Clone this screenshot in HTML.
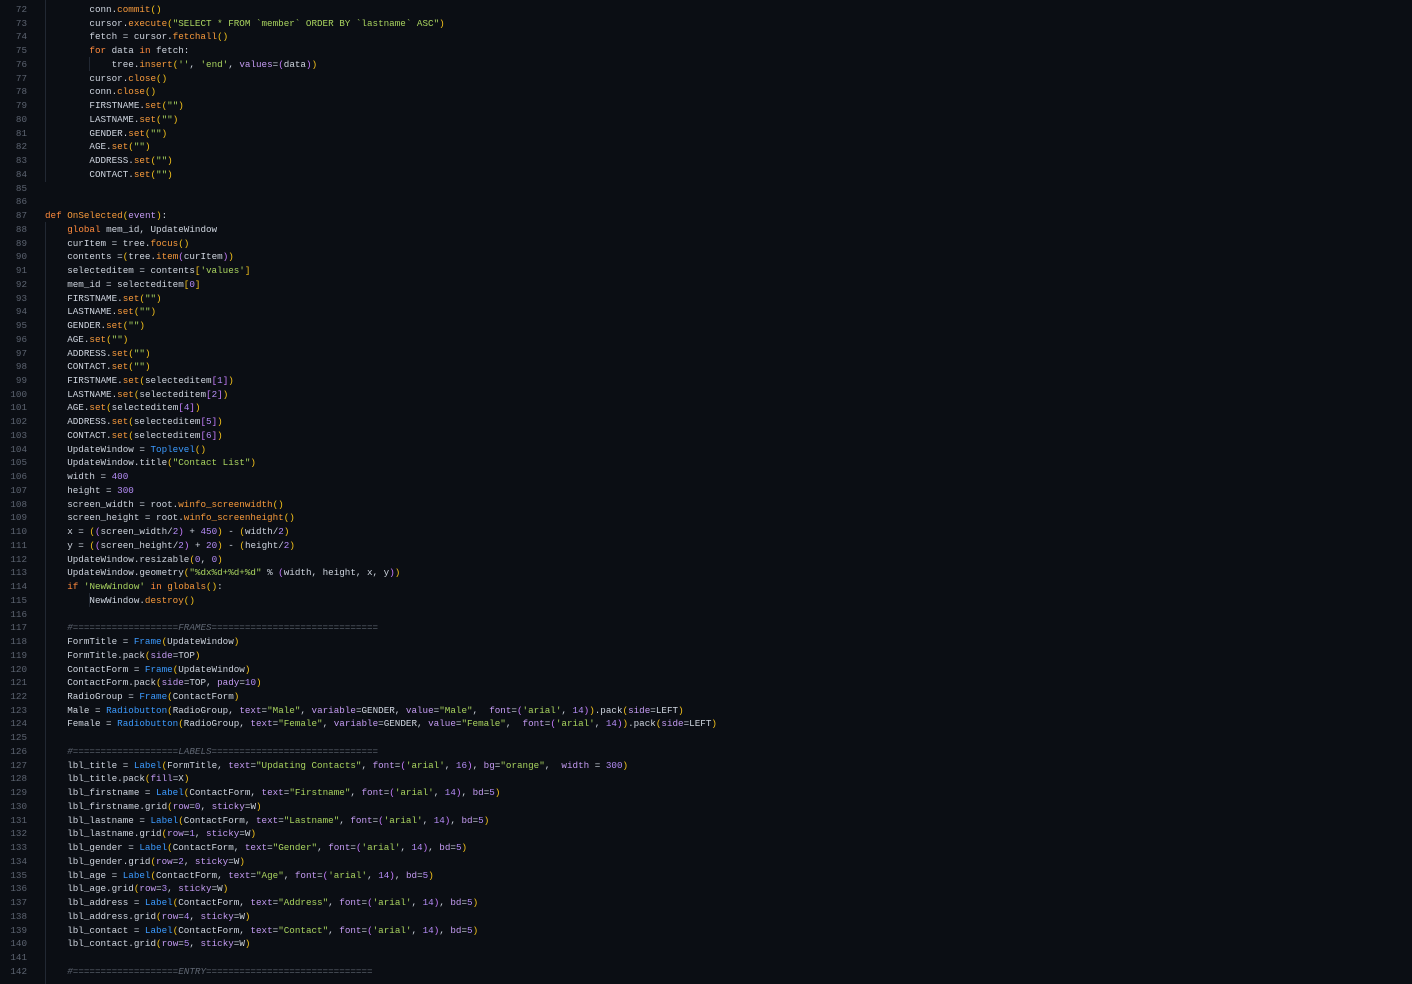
<!DOCTYPE html>
<html><head><meta charset="utf-8"><style>
html,body{margin:0;padding:0;background:#0b0e14;width:1412px;height:984px;overflow:hidden}
.ed{position:absolute;left:0;top:3px;font-family:"Liberation Mono",monospace;font-size:9.25px;line-height:13.74px;color:#cfd5df;white-space:pre}
.ln{position:absolute;left:0;width:27px;text-align:right;color:#5c6370}
.cd{position:absolute;left:45px}
.k{color:#ff8a3d}.f{color:#f79a3c}.s{color:#a9d35f}.n{color:#b48cf5}.c{color:#3c9bff}.p{color:#c49bf2}.y{color:#f5c21b}.v{color:#c77dff}.cm{color:#5f6672;font-style:italic}
.g{position:absolute;width:1px;background:#222833}
</style></head><body>
<div class="g" style="left:45px;top:0;height:182px"></div>
<div class="g" style="left:45px;top:222px;height:762px"></div>
<div class="g" style="left:89px;top:57px;height:14px"></div>
<div class="g" style="left:89px;top:593px;height:14px"></div>
<div class="ed" id="e"></div>
<script>
var L=[
'        conn.<span class="f">commit</span><span class="y">()</span>',
'        cursor.<span class="f">execute</span><span class="y">(</span><span class="s">"SELECT * FROM `member` ORDER BY `lastname` ASC"</span><span class="y">)</span>',
'        fetch = cursor.<span class="f">fetchall</span><span class="y">()</span>',
'        <span class="k">for</span> data <span class="k">in</span> fetch:',
'            tree.<span class="f">insert</span><span class="y">(</span><span class="s">\'\'</span>, <span class="s">\'end\'</span>, <span class="p">values</span>=<span class="v">(</span>data<span class="v">)</span><span class="y">)</span>',
'        cursor.<span class="f">close</span><span class="y">()</span>',
'        conn.<span class="f">close</span><span class="y">()</span>',
'        FIRSTNAME.<span class="f">set</span><span class="y">(</span><span class="s">""</span><span class="y">)</span>',
'        LASTNAME.<span class="f">set</span><span class="y">(</span><span class="s">""</span><span class="y">)</span>',
'        GENDER.<span class="f">set</span><span class="y">(</span><span class="s">""</span><span class="y">)</span>',
'        AGE.<span class="f">set</span><span class="y">(</span><span class="s">""</span><span class="y">)</span>',
'        ADDRESS.<span class="f">set</span><span class="y">(</span><span class="s">""</span><span class="y">)</span>',
'        CONTACT.<span class="f">set</span><span class="y">(</span><span class="s">""</span><span class="y">)</span>',
'',
'',
'<span class="k">def</span> <span class="f">OnSelected</span><span class="y">(</span><span class="p">event</span><span class="y">)</span>:',
'    <span class="k">global</span> mem_id, UpdateWindow',
'    curItem = tree.<span class="f">focus</span><span class="y">()</span>',
'    contents =<span class="y">(</span>tree.<span class="f">item</span><span class="v">(</span>curItem<span class="v">)</span><span class="y">)</span>',
'    selecteditem = contents<span class="y">[</span><span class="s">\'values\'</span><span class="y">]</span>',
'    mem_id = selecteditem<span class="y">[</span><span class="n">0</span><span class="y">]</span>',
'    FIRSTNAME.<span class="f">set</span><span class="y">(</span><span class="s">""</span><span class="y">)</span>',
'    LASTNAME.<span class="f">set</span><span class="y">(</span><span class="s">""</span><span class="y">)</span>',
'    GENDER.<span class="f">set</span><span class="y">(</span><span class="s">""</span><span class="y">)</span>',
'    AGE.<span class="f">set</span><span class="y">(</span><span class="s">""</span><span class="y">)</span>',
'    ADDRESS.<span class="f">set</span><span class="y">(</span><span class="s">""</span><span class="y">)</span>',
'    CONTACT.<span class="f">set</span><span class="y">(</span><span class="s">""</span><span class="y">)</span>',
'    FIRSTNAME.<span class="f">set</span><span class="y">(</span>selecteditem<span class="v">[</span><span class="n">1</span><span class="v">]</span><span class="y">)</span>',
'    LASTNAME.<span class="f">set</span><span class="y">(</span>selecteditem<span class="v">[</span><span class="n">2</span><span class="v">]</span><span class="y">)</span>',
'    AGE.<span class="f">set</span><span class="y">(</span>selecteditem<span class="v">[</span><span class="n">4</span><span class="v">]</span><span class="y">)</span>',
'    ADDRESS.<span class="f">set</span><span class="y">(</span>selecteditem<span class="v">[</span><span class="n">5</span><span class="v">]</span><span class="y">)</span>',
'    CONTACT.<span class="f">set</span><span class="y">(</span>selecteditem<span class="v">[</span><span class="n">6</span><span class="v">]</span><span class="y">)</span>',
'    UpdateWindow = <span class="c">Toplevel</span><span class="y">()</span>',
'    UpdateWindow.title<span class="y">(</span><span class="s">"Contact List"</span><span class="y">)</span>',
'    width = <span class="n">400</span>',
'    height = <span class="n">300</span>',
'    screen_width = root.<span class="f">winfo_screenwidth</span><span class="y">()</span>',
'    screen_height = root.<span class="f">winfo_screenheight</span><span class="y">()</span>',
'    x = <span class="y">(</span><span class="v">(</span>screen_width/<span class="n">2</span><span class="v">)</span> + <span class="n">450</span><span class="y">)</span> - <span class="y">(</span>width/<span class="n">2</span><span class="y">)</span>',
'    y = <span class="y">(</span><span class="v">(</span>screen_height/<span class="n">2</span><span class="v">)</span> + <span class="n">20</span><span class="y">)</span> - <span class="y">(</span>height/<span class="n">2</span><span class="y">)</span>',
'    UpdateWindow.resizable<span class="y">(</span><span class="n">0</span>, <span class="n">0</span><span class="y">)</span>',
'    UpdateWindow.geometry<span class="y">(</span><span class="s">"%dx%d+%d+%d"</span> % <span class="v">(</span>width, height, x, y<span class="v">)</span><span class="y">)</span>',
'    <span class="k">if</span> <span class="s">\'NewWindow\'</span> <span class="k">in</span> <span class="f">globals</span><span class="y">()</span>:',
'        NewWindow.<span class="f">destroy</span><span class="y">()</span>',
'',
'    <span class="cm">#===================FRAMES==============================</span>',
'    FormTitle = <span class="c">Frame</span><span class="y">(</span>UpdateWindow<span class="y">)</span>',
'    FormTitle.pack<span class="y">(</span><span class="p">side</span>=TOP<span class="y">)</span>',
'    ContactForm = <span class="c">Frame</span><span class="y">(</span>UpdateWindow<span class="y">)</span>',
'    ContactForm.pack<span class="y">(</span><span class="p">side</span>=TOP, <span class="p">pady</span>=<span class="n">10</span><span class="y">)</span>',
'    RadioGroup = <span class="c">Frame</span><span class="y">(</span>ContactForm<span class="y">)</span>',
'    Male = <span class="c">Radiobutton</span><span class="y">(</span>RadioGroup, <span class="p">text</span>=<span class="s">"Male"</span>, <span class="p">variable</span>=GENDER, <span class="p">value</span>=<span class="s">"Male"</span>,  <span class="p">font</span>=<span class="v">(</span><span class="s">\'arial\'</span>, <span class="n">14</span><span class="v">)</span><span class="y">)</span>.pack<span class="y">(</span><span class="p">side</span>=LEFT<span class="y">)</span>',
'    Female = <span class="c">Radiobutton</span><span class="y">(</span>RadioGroup, <span class="p">text</span>=<span class="s">"Female"</span>, <span class="p">variable</span>=GENDER, <span class="p">value</span>=<span class="s">"Female"</span>,  <span class="p">font</span>=<span class="v">(</span><span class="s">\'arial\'</span>, <span class="n">14</span><span class="v">)</span><span class="y">)</span>.pack<span class="y">(</span><span class="p">side</span>=LEFT<span class="y">)</span>',
'',
'    <span class="cm">#===================LABELS==============================</span>',
'    lbl_title = <span class="c">Label</span><span class="y">(</span>FormTitle, <span class="p">text</span>=<span class="s">"Updating Contacts"</span>, <span class="p">font</span>=<span class="v">(</span><span class="s">\'arial\'</span>, <span class="n">16</span><span class="v">)</span>, <span class="p">bg</span>=<span class="s">"orange"</span>,  <span class="p">width</span> = <span class="n">300</span><span class="y">)</span>',
'    lbl_title.pack<span class="y">(</span><span class="p">fill</span>=X<span class="y">)</span>',
'    lbl_firstname = <span class="c">Label</span><span class="y">(</span>ContactForm, <span class="p">text</span>=<span class="s">"Firstname"</span>, <span class="p">font</span>=<span class="v">(</span><span class="s">\'arial\'</span>, <span class="n">14</span><span class="v">)</span>, <span class="p">bd</span>=<span class="n">5</span><span class="y">)</span>',
'    lbl_firstname.grid<span class="y">(</span><span class="p">row</span>=<span class="n">0</span>, <span class="p">sticky</span>=W<span class="y">)</span>',
'    lbl_lastname = <span class="c">Label</span><span class="y">(</span>ContactForm, <span class="p">text</span>=<span class="s">"Lastname"</span>, <span class="p">font</span>=<span class="v">(</span><span class="s">\'arial\'</span>, <span class="n">14</span><span class="v">)</span>, <span class="p">bd</span>=<span class="n">5</span><span class="y">)</span>',
'    lbl_lastname.grid<span class="y">(</span><span class="p">row</span>=<span class="n">1</span>, <span class="p">sticky</span>=W<span class="y">)</span>',
'    lbl_gender = <span class="c">Label</span><span class="y">(</span>ContactForm, <span class="p">text</span>=<span class="s">"Gender"</span>, <span class="p">font</span>=<span class="v">(</span><span class="s">\'arial\'</span>, <span class="n">14</span><span class="v">)</span>, <span class="p">bd</span>=<span class="n">5</span><span class="y">)</span>',
'    lbl_gender.grid<span class="y">(</span><span class="p">row</span>=<span class="n">2</span>, <span class="p">sticky</span>=W<span class="y">)</span>',
'    lbl_age = <span class="c">Label</span><span class="y">(</span>ContactForm, <span class="p">text</span>=<span class="s">"Age"</span>, <span class="p">font</span>=<span class="v">(</span><span class="s">\'arial\'</span>, <span class="n">14</span><span class="v">)</span>, <span class="p">bd</span>=<span class="n">5</span><span class="y">)</span>',
'    lbl_age.grid<span class="y">(</span><span class="p">row</span>=<span class="n">3</span>, <span class="p">sticky</span>=W<span class="y">)</span>',
'    lbl_address = <span class="c">Label</span><span class="y">(</span>ContactForm, <span class="p">text</span>=<span class="s">"Address"</span>, <span class="p">font</span>=<span class="v">(</span><span class="s">\'arial\'</span>, <span class="n">14</span><span class="v">)</span>, <span class="p">bd</span>=<span class="n">5</span><span class="y">)</span>',
'    lbl_address.grid<span class="y">(</span><span class="p">row</span>=<span class="n">4</span>, <span class="p">sticky</span>=W<span class="y">)</span>',
'    lbl_contact = <span class="c">Label</span><span class="y">(</span>ContactForm, <span class="p">text</span>=<span class="s">"Contact"</span>, <span class="p">font</span>=<span class="v">(</span><span class="s">\'arial\'</span>, <span class="n">14</span><span class="v">)</span>, <span class="p">bd</span>=<span class="n">5</span><span class="y">)</span>',
'    lbl_contact.grid<span class="y">(</span><span class="p">row</span>=<span class="n">5</span>, <span class="p">sticky</span>=W<span class="y">)</span>',
'',
'    <span class="cm">#===================ENTRY==============================</span>'
];
var h='';
for(var i=0;i<L.length;i++){var t=i*13.74;
h+='<div class="ln" style="top:'+t+'px">'+(72+i)+'</div><div class="cd" style="top:'+t+'px">'+L[i]+'</div>';}
document.getElementById('e').innerHTML=h;
</script>
</body></html>
